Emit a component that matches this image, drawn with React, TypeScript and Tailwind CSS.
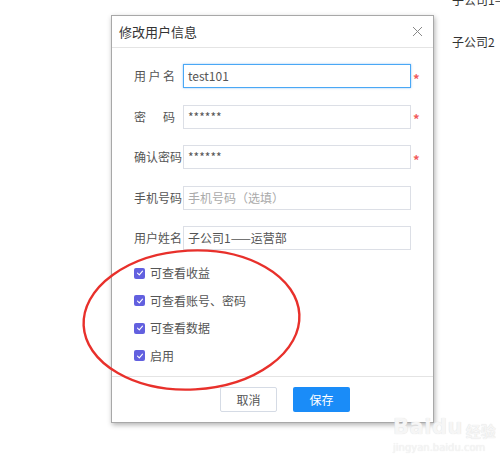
import React from "react";

const font = { fontFamily: '"Noto Sans CJK SC", "Noto Sans", sans-serif' };

function Check() {
  return (
    <span className="flex h-[11px] w-[11px] items-center justify-center rounded-[2px] bg-[#6260df]">
      <svg width="8" height="8" viewBox="0 0 8 8" fill="none">
        <path d="M1.5 4.2 L3.3 5.8 L6.5 2.2" stroke="#fff" strokeWidth="1.1" strokeLinecap="round" strokeLinejoin="round" />
      </svg>
    </span>
  );
}

function Row({ label, value, placeholder, required, focused }: { label: React.ReactNode; value?: string; placeholder?: string; required?: boolean; focused?: boolean }) {
  return (
    <div className="flex h-[24px] items-center">
      <div className="flex w-[49px] shrink-0 items-center text-[12px] text-[#555]">{label}</div>
      <div
        className={
          "flex h-[24px] w-[228px] items-center border pl-[4px] text-[12px] " +
          (focused ? "border-[#4aa8f5] shadow-[0_0_2px_rgba(45,140,240,0.5)]" : "border-[#dcdfe6]")
        }
      >
        {value ? <span className="text-[#555]">{value}</span> : <span className="text-[#aaa]">{placeholder}</span>}
      </div>
      {required && <span className="ml-[2px] mt-[4px] text-[13px] font-bold leading-none text-[#f25b5b]">*</span>}
    </div>
  );
}

export default function App() {
  return (
    <div className="relative h-[464px] w-[500px] overflow-hidden bg-white" style={font}>
      {/* background text */}
      <div className="absolute left-[452px] top-[-9px] whitespace-nowrap text-[12px] text-[#333]">子公司1——</div>
      <div className="absolute left-[452px] top-[33px] whitespace-nowrap text-[12px] text-[#333]">子公司2</div>
      <div className="absolute left-[393px] top-[417px] whitespace-nowrap text-[#f6f6f6]">
        <div className="flex items-end gap-[3px]">
          <span className="text-[21px] font-bold leading-none tracking-[0.5px] [text-shadow:0_0_1px_#d8d8d8]" style={{ fontFamily: '"DejaVu Sans", sans-serif' }}>Baidu</span>
          <span className="text-[15px] font-bold leading-none [text-shadow:0_0_1px_#d8d8d8]">经验</span>
        </div>
        <div className="mt-[5px] text-[10px] leading-none [text-shadow:0_0_1px_#e0e0e0]" style={{ fontFamily: '"DejaVu Sans", sans-serif' }}>jingyan.baidu.com</div>
      </div>

      {/* dialog */}
      <div className="ml-[111px] mt-[15px] flex h-[408px] w-[323px] flex-col border border-[#a8a8a8] bg-white shadow-[1px_2px_5px_rgba(0,0,0,0.3)]">
        <div className="flex h-[32px] shrink-0 items-center justify-between border-b border-[#e4e4e4] pl-[7px] pr-[10px]">
          <span className="text-[13px] text-[#333]">修改用户信息</span>
          <svg width="11" height="11" viewBox="0 0 11 11">
            <path d="M1 1 L10 10 M10 1 L1 10" stroke="#888" strokeWidth="1" />
          </svg>
        </div>
        <div className="flex flex-1 flex-col pl-[22px] pt-[16px]">
          <div className="flex flex-col gap-[16.5px]">
            <Row
              focused
              required
              value="test101"
              label={<span className="tracking-[2.5px]">用户名</span>}
            />
            <Row
              required
              value="******"
              label={
                <span className="flex w-[41px] justify-between">
                  <span>密</span>
                  <span>码</span>
                </span>
              }
            />
            <Row required value="******" label="确认密码" />
            <Row placeholder="手机号码（选填）" label="手机号码" />
            <Row value="子公司1——运营部" label="用户姓名" />
          </div>
          <div className="mt-[15px] flex flex-col gap-[11.6px]">
            {["可查看收益", "可查看账号、密码", "可查看数据", "启用"].map((t) => (
              <div key={t} className="flex h-[16px] items-center gap-[5px]">
                <Check />
                <span className="text-[12px] text-[#555]">{t}</span>
              </div>
            ))}
          </div>
        </div>
        <div className="flex h-[46px] shrink-0 items-start border-t border-[#e4e4e4] pl-[108px] pt-[10px]">
          <button className="flex h-[25px] w-[57px] items-center justify-center rounded-[2px] border border-[#d5dbe5] bg-white text-[12px] text-[#555]">
            取消
          </button>
          <button className="ml-[16px] flex h-[25px] w-[57px] items-center justify-center rounded-[2px] bg-[#1a8cf8] text-[12px] text-white">
            保存
          </button>
        </div>
      </div>

      {/* red annotation ellipse */}
      <svg className="pointer-events-none absolute left-0 top-0" width="500" height="464">
        <ellipse cx="191.5" cy="320" rx="108" ry="69.5" fill="none" stroke="#e8302b" strokeWidth="2.4" transform="rotate(-3 191.5 320)" />
      </svg>
    </div>
  );
}
